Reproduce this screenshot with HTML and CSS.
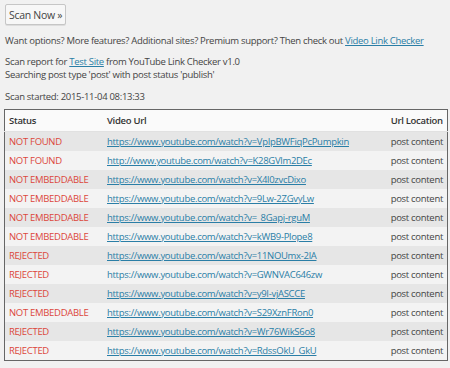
FILE: index.html
```html
<!DOCTYPE html>
<html>
    <head>
        <link rel="stylesheet" href="styles.css">
    </head>
    <body>
        <button class="scan-btn">Scan Now &raquo;</button>

        <p class="promo">Want options? More features? Additional sites? Premium support? Then check out <a href="#">Video Link Checker</a></p>

        <p class="info">
            Scan report for <a href="#">Test Site</a> from YouTube Link Checker v1.0<br>
            Searching post type 'post' with post status 'publish'
        </p>

        <p class="started">Scan started: 2015-11-04 08:13:33</p>

        <table class="report">
            <thead>
                <tr>
                    <th class="col-status">Status</th>
                    <th class="col-url">Video Url</th>
                    <th class="col-loc">Url Location</th>
                </tr>
            </thead>
            <tbody>
                <tr><td class="bad">NOT FOUND</td><td><a href="#">https://www.youtube.com/watch?v=VpIpBWFiqPcPumpkin</a></td><td>post content</td></tr>
                <tr><td class="bad">NOT FOUND</td><td><a href="#">http://www.youtube.com/watch?v=K28GVlm2DEc</a></td><td>post content</td></tr>
                <tr><td class="bad">NOT EMBEDDABLE</td><td><a href="#">https://www.youtube.com/watch?v=X4l0zvcDixo</a></td><td>post content</td></tr>
                <tr><td class="bad">NOT EMBEDDABLE</td><td><a href="#">https://www.youtube.com/watch?v=9Lw-2ZGvyLw</a></td><td>post content</td></tr>
                <tr><td class="bad">NOT EMBEDDABLE</td><td><a href="#">https://www.youtube.com/watch?v=_8Gapj-rguM</a></td><td>post content</td></tr>
                <tr><td class="bad">NOT EMBEDDABLE</td><td><a href="#">https://www.youtube.com/watch?v=kWB9-Plope8</a></td><td>post content</td></tr>
                <tr><td class="bad">REJECTED</td><td><a href="#">https://www.youtube.com/watch?v=11NOUmx-2lA</a></td><td>post content</td></tr>
                <tr><td class="bad">REJECTED</td><td><a href="#" class="plain">https://www.youtube.com/watch?v=GWNVAC646zw</a></td><td>post content</td></tr>
                <tr><td class="bad">REJECTED</td><td><a href="#">https://www.youtube.com/watch?v=y9I-vjASCCE</a></td><td>post content</td></tr>
                <tr><td class="bad">NOT EMBEDDABLE</td><td><a href="#">https://www.youtube.com/watch?v=S29XznFRon0</a></td><td>post content</td></tr>
                <tr><td class="bad">REJECTED</td><td><a href="#">https://www.youtube.com/watch?v=Wr76WikS6o8</a></td><td>post content</td></tr>
                <tr><td class="bad">REJECTED</td><td><a href="#">https://www.youtube.com/watch?v=RdssOkU_GkU</a></td><td>post content</td></tr>
            </tbody>
        </table>
    </body>
</html>
```

FILE: styles.css
```css
body {
    font-family: "Open Sans", sans-serif;
    font-size: 9.5px;
    letter-spacing: -0.3px;
    color: #444;
    margin: 0;
    padding: 4px 3px 0 5px;
    background-color: #f1f1f1;
}

a {
    color: #2a7ea6;
    text-decoration: underline;
}

.scan-btn {
    font-family: "Open Sans", sans-serif;
    font-size: 10.5px;
    letter-spacing: -0.3px;
    color: #444;
    height: 21px;
    padding: 0 3px;
    background-color: #f7f7f7;
    border: 1px solid #c6c6c6;
    border-radius: 2px;
    box-shadow: 0 1px 0 #ddd;
}

.promo {
    margin: 9px 0 0 0;
}

.info {
    margin: 8px 0 0 0;
    line-height: 13px;
}

.started {
    margin: 9px 0 0 0;
}

.report {
    width: 444px;
    margin: 6px 0 0 -1px;
    border-collapse: collapse;
    border: 1px solid #666;
    background-color: #fafafa;
}

.report th {
    text-align: left;
    font-weight: 600;
    color: #333;
    height: 21px;
    padding: 0 4px;
    border-bottom: 1px solid #e1e1e1;
}

.report td {
    height: 19px;
    padding: 0 4px;
    white-space: nowrap;
}

.report tbody tr:nth-child(odd) {
    background-color: #e6e6e6;
}

.report tbody tr:nth-child(even) {
    background-color: #f3f3f3;
}

.col-status {
    width: 90px;
}

.col-loc {
    width: 52px;
}

.bad {
    color: #dc463c;
}

.plain {
    text-decoration: none;
}
```
